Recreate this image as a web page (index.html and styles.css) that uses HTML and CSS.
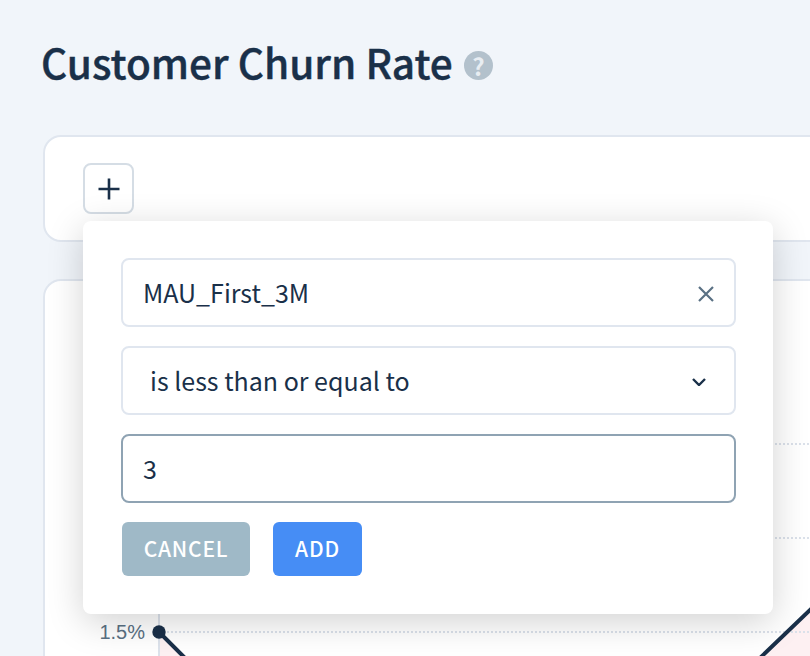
FILE: index.html
```html
<!DOCTYPE html>
<html lang="en">
<head>
    <meta charset="UTF-8">
    <meta name="viewport" content="width=device-width, initial-scale=1.0">
    <title>Customer Churn Rate</title>
    <link rel="stylesheet" href="styles.css">
</head>
<body>
    <div class="page">
        <div class="heading">
            <h1 class="title">Customer Churn Rate</h1>
            <span class="help">?</span>
        </div>

        <div class="filter-card">
            <button class="add-filter">
                <svg width="24" height="24" viewBox="0 0 24 24"><path d="M12 1.5v21M1.5 12h21" fill="none" stroke="#1a3049" stroke-width="2.6"/></svg>
            </button>

            <div class="popover">
                <div class="field">
                    <span class="field-text">MAU_First_3M</span>
                    <svg class="icon" width="16" height="16" viewBox="0 0 16 16"><path d="M1 1l14 14M15 1L1 15" fill="none" stroke="#5a7184" stroke-width="2.2"/></svg>
                </div>
                <div class="field field-select">
                    <span class="field-text">is less than or equal to</span>
                    <svg class="icon" width="14" height="8" viewBox="0 0 14 8"><path d="M1 1l6 6 6-6" fill="none" stroke="#1a3049" stroke-width="2.4"/></svg>
                </div>
                <div class="field field-focus">
                    <span class="field-text">3</span>
                </div>
                <div class="actions">
                    <button class="btn btn-cancel">CANCEL</button>
                    <button class="btn btn-add">ADD</button>
                </div>
            </div>
        </div>

        <div class="chart-card">
            <svg class="chart" width="765" height="375" viewBox="0 0 765 375">
                <path d="M115 351V375H138ZM717 375L765 329V375Z" fill="#fdf0f2"/>
                <path d="M114 70V375" stroke="#dde3ec" stroke-width="2"/>
                <path d="M114 163H765M114 257H765M114 351H765" stroke="#dbe1ea" stroke-width="2" stroke-dasharray="2 2"/>
                <path d="M114 351L140 377M715 377L767 327" fill="none" stroke="#1a3049" stroke-width="4"/>
                <circle cx="114" cy="351" r="6.7" fill="#1a3049"/>
                <text class="axis-label" x="100" y="358" text-anchor="end">1.5%</text>
            </svg>
        </div>
    </div>
</body>
</html>
```

FILE: styles.css
```css
body {
    margin: 0;
    background: #f1f5fa;
    font-family: "Noto Sans CJK JP", "Noto Sans", sans-serif;
    color: #1a3049;
}

.page {
    box-sizing: border-box;
    width: 810px;
    height: 656px;
    padding: 32px 0 0 41px;
    overflow: hidden;
}

.heading {
    display: flex;
    align-items: center;
    gap: 11px;
    height: 60px;
    margin-bottom: 43px;
}

.title {
    margin: 0;
    font-size: 40.6px;
    font-weight: 500;
    line-height: 60px;
    -webkit-text-stroke: 0.4px #1a3049;
}

.help {
    width: 29px;
    height: 29px;
    margin-top: 6px;
    border-radius: 50%;
    background: #b3c1cc;
    color: #e8edf2;
    font-size: 24px;
    font-weight: 700;
    line-height: 29px;
    text-align: center;
}

.filter-card {
    position: relative;
    box-sizing: border-box;
    width: 900px;
    height: 107px;
    margin-left: 2px;
    padding: 26px 0 0 38px;
    background: #fff;
    border: 2px solid #e0e6ef;
    border-radius: 18px;
}

.add-filter {
    display: flex;
    align-items: center;
    justify-content: center;
    box-sizing: border-box;
    width: 51px;
    height: 51px;
    padding: 0;
    background: #fff;
    border: 2px solid #d5dde5;
    border-radius: 8px;
}

.popover {
    position: absolute;
    z-index: 2;
    top: 84px;
    left: 38px;
    box-sizing: border-box;
    width: 690px;
    height: 393px;
    padding: 37px 37px 0 38px;
    background: #fff;
    border-radius: 8px;
    box-shadow: 0 8px 36px rgba(0, 0, 0, 0.18);
}

.field {
    display: flex;
    align-items: center;
    justify-content: space-between;
    box-sizing: border-box;
    height: 69px;
    margin-bottom: 19px;
    padding: 0 20px;
    border: 2px solid #e0e6ef;
    border-radius: 8px;
    font-size: 25px;
}

.field-text {
    margin-top: -2px;
}

.icon {
    margin-top: 3px;
}

.field-select {
    padding: 0 28px 0 27px;
}

.field-focus {
    border-color: #8fa3b3;
}

.actions {
    display: flex;
    gap: 23px;
    margin-left: 1px;
}

.btn {
    height: 54px;
    padding: 0 0 2px;
    border: 0;
    border-radius: 6px;
    color: #fff;
    font-family: inherit;
    font-size: 21px;
    font-weight: 500;
    letter-spacing: 0.8px;
}

.btn-cancel {
    width: 128px;
    background: #9fb9c7;
}

.btn-add {
    width: 89px;
    background: #468df5;
}

.chart-card {
    box-sizing: border-box;
    width: 900px;
    height: 420px;
    margin: 37px 0 0 2px;
    background: #fff;
    border: 2px solid #e0e6ef;
    border-radius: 18px;
}

.chart {
    display: block;
}

.axis-label {
    font-family: "Liberation Sans", Arial, sans-serif;
    font-size: 20px;
    fill: #5a7184;
}
```
